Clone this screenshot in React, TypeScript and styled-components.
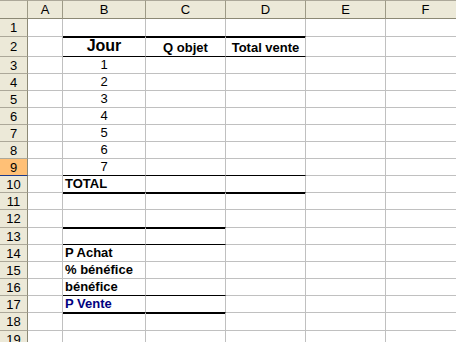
import styled, { createGlobalStyle } from "styled-components";

const GlobalStyle = createGlobalStyle`
  html, body {
    margin: 0;
    padding: 0;
    background: #ffffff;
    overflow: hidden;
  }
  body {
    font-family: Arial, "Liberation Sans", sans-serif;
  }
`;

type Line = "thin" | "thick";
type ColKey = "A" | "B" | "C" | "D" | "E" | "F";

interface CellData {
  text: string;
  bold?: boolean;
  big?: boolean;
  center?: boolean;
  color?: string;
}

interface RowData {
  n: number;
  h: number;
  cells?: Partial<Record<ColKey, CellData>>;
  lines?: Partial<Record<ColKey, Line>>;
  active?: boolean;
}

const cols: { key: ColKey; w: number }[] = [
  { key: "A", w: 35 },
  { key: "B", w: 83 },
  { key: "C", w: 80 },
  { key: "D", w: 80 },
  { key: "E", w: 80 },
  { key: "F", w: 80 },
];

const bcd: Partial<Record<ColKey, Line>> = { B: "thin", C: "thin", D: "thin" };
const bcdThick: Partial<Record<ColKey, Line>> = { B: "thick", C: "thick", D: "thick" };

const num = (t: string): Partial<Record<ColKey, CellData>> => ({ B: { text: t, center: true } });

const rows: RowData[] = [
  { n: 1, h: 18, lines: bcdThick },
  {
    n: 2,
    h: 20,
    lines: bcd,
    cells: {
      B: { text: "Jour", bold: true, big: true, center: true },
      C: { text: "Q objet", bold: true, center: true },
      D: { text: "Total vente", bold: true, center: true },
    },
  },
  { n: 3, h: 17, cells: num("1") },
  { n: 4, h: 17, cells: num("2") },
  { n: 5, h: 17, cells: num("3") },
  { n: 6, h: 17, cells: num("4") },
  { n: 7, h: 17, cells: num("5") },
  { n: 8, h: 17, cells: num("6") },
  { n: 9, h: 17, cells: num("7"), lines: bcd, active: true },
  { n: 10, h: 17, cells: { B: { text: "TOTAL", bold: true } }, lines: bcdThick },
  { n: 11, h: 17 },
  { n: 12, h: 18, lines: { B: "thick", C: "thick" } },
  { n: 13, h: 17, lines: { B: "thin", C: "thin" } },
  { n: 14, h: 17, cells: { B: { text: "P Achat", bold: true } } },
  { n: 15, h: 17, cells: { B: { text: "% bénéfice", bold: true } } },
  { n: 16, h: 17, cells: { B: { text: "bénéfice", bold: true } }, lines: { B: "thin", C: "thin" } },
  {
    n: 17,
    h: 17,
    cells: { B: { text: "P Vente", bold: true, color: "#000080" } },
    lines: { B: "thick", C: "thick" },
  },
  { n: 18, h: 18 },
  { n: 19, h: 17 },
];

const Sheet = styled.div`
  display: flex;
  flex-direction: column;
  width: 456px;
  height: 342px;
  overflow: hidden;
  background: #ffffff;
`;

const Row = styled.div<{ $h: number }>`
  display: flex;
  flex: 0 0 auto;
  height: ${(p) => p.$h}px;
`;

const HeaderRow = styled.div`
  display: flex;
  flex: 0 0 auto;
  height: 19px;
`;

const Corner = styled.div`
  flex: 0 0 28px;
  box-sizing: border-box;
  background: #ece9d8;
  border-top: 1px solid #aca899;
  border-right: 1px solid #9d9a86;
  border-bottom: 1px solid #8c8975;
`;

const ColHead = styled.div<{ $w: number }>`
  flex: 0 0 ${(p) => p.$w}px;
  box-sizing: border-box;
  background: #ece9d8;
  border-top: 1px solid #aca899;
  border-right: 1px solid #9d9a86;
  border-bottom: 1px solid #8c8975;
  display: flex;
  align-items: center;
  justify-content: center;
  font-size: 13px;
  line-height: 17px;
  color: #000000;
`;

const RowHead = styled.div<{ $active?: boolean }>`
  flex: 0 0 28px;
  box-sizing: border-box;
  background: ${(p) => (p.$active ? "#ffc076" : "#ece9d8")};
  border-right: 1px solid #8c8975;
  border-bottom: 1px solid ${(p) => (p.$active ? "#1c3a8a" : "#aca899")};
  display: flex;
  align-items: center;
  justify-content: center;
  font-size: 13px;
  color: #000000;
`;

const Cell = styled.div<{ $w: number; $line?: Line; $center?: boolean }>`
  flex: 0 0 ${(p) => p.$w}px;
  position: relative;
  box-sizing: border-box;
  border-right: 1px solid #c0c0c0;
  border-bottom: 1px solid ${(p) => (p.$line ? "#000000" : "#c0c0c0")};
  box-shadow: ${(p) => (p.$line === "thick" ? "0 1px 0 #000000" : "none")};
  display: flex;
  align-items: flex-end;
  justify-content: ${(p) => (p.$center ? "center" : "flex-start")};
  padding: 0 2px 1px 2px;
  white-space: nowrap;
`;

const Text = styled.span<{ $bold?: boolean; $big?: boolean; $color?: string }>`
  font-family: Arial, "Liberation Sans", sans-serif;
  font-size: ${(p) => (p.$big ? "16px" : "13px")};
  font-weight: ${(p) => (p.$bold ? 700 : 400)};
  color: ${(p) => p.$color || "#000000"};
  line-height: ${(p) => (p.$big ? "18px" : "15px")};
`;

export default function App() {
  return (
    <>
      <GlobalStyle />
      <Sheet>
        <HeaderRow>
          <Corner />
          {cols.map((c) => (
            <ColHead key={c.key} $w={c.w}>
              {c.key}
            </ColHead>
          ))}
        </HeaderRow>
        {rows.map((r) => (
          <Row key={r.n} $h={r.h}>
            <RowHead $active={r.active}>{r.n}</RowHead>
            {cols.map((c) => {
              const cell = r.cells?.[c.key];
              return (
                <Cell key={c.key} $w={c.w} $line={r.lines?.[c.key]} $center={cell?.center}>
                  {cell && (
                    <Text $bold={cell.bold} $big={cell.big} $color={cell.color}>
                      {cell.text}
                    </Text>
                  )}
                </Cell>
              );
            })}
          </Row>
        ))}
      </Sheet>
    </>
  );
}
